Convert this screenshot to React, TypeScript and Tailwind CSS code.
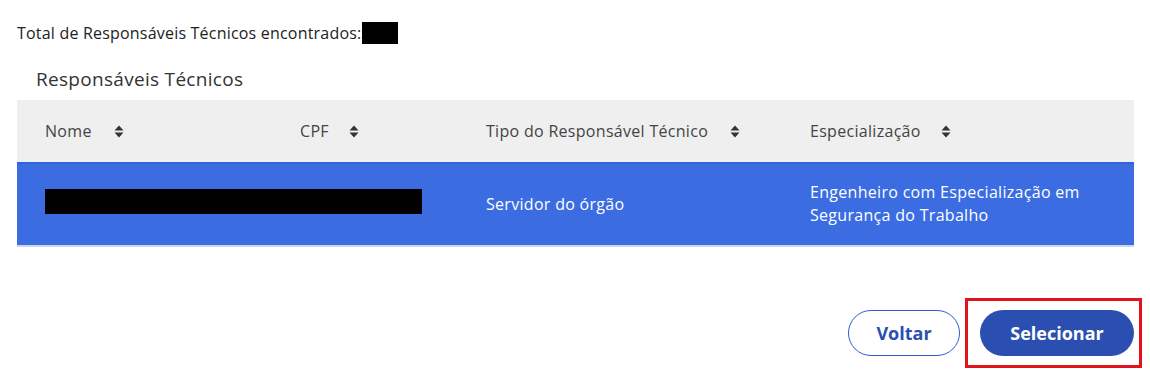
import React from 'react';

function SortIcon() {
  return (
    <svg width="10" height="13" viewBox="0 0 10 13" className="shrink-0">
      <path d="M5 0.5 L9.5 5.5 H0.5 Z" fill="#333" />
      <path d="M5 12.5 L9.5 7.5 H0.5 Z" fill="#333" />
    </svg>
  );
}

export default function App() {
  const font = { fontFamily: '"Open Sans", Lato, sans-serif' };
  return (
    <div className="w-[1150px] h-[392px] bg-white text-[#333]" style={font}>
      <div className="pt-[22px] pl-[17px] flex items-center text-[16px] tracking-[0.2px] text-[#222] h-[22px] box-content">
        <span>Total de Responsáveis Técnicos encontrados:</span>
        <span className="inline-block w-[36px] h-[22px] bg-black ml-px" />
      </div>

      <h2 className="mt-[23px] ml-[36px] text-[19px] tracking-[0.3px] leading-[24px] text-[#333]">Responsáveis Técnicos</h2>

      <div className="mt-[9px] mx-[17px] w-[1117px] tracking-[0.3px]">
        {/* header */}
        <div className="h-[62px] bg-[#efefef] flex items-center text-[16px] text-[#444]">
          <div className="w-[255px] pl-[28px] flex items-center gap-[22px]">
            <span>Nome</span>
            <SortIcon />
          </div>
          <div className="w-[186px] pl-[28px] flex items-center gap-[20px]">
            <span>CPF</span>
            <SortIcon />
          </div>
          <div className="w-[324px] pl-[28px] flex items-center gap-[22px]">
            <span>Tipo do Responsável Técnico</span>
            <SortIcon />
          </div>
          <div className="flex-1 pl-[28px] flex items-center gap-[20px]">
            <span>Especialização</span>
            <SortIcon />
          </div>
        </div>
        {/* row */}
        <div className="h-[85px] bg-[#3b6ce2] border-t-2 border-[#2f64de] border-b-2 border-b-[#c9d6f2] flex items-center text-[16px] text-white">
          <div className="w-[441px] pl-[28px] pb-[6px]">
            <span className="block w-[377px] h-[25px] bg-black" />
          </div>
          <div className="w-[324px] pl-[28px] pb-[2px]">Servidor do órgão</div>
          <div className="flex-1 pl-[28px] leading-[23px] pb-[2px]">
            Engenheiro com Especialização em<br />Segurança do Trabalho
          </div>
        </div>
      </div>

      <div className="mt-[51px] mr-[8px] flex justify-end items-center">
        <button className="w-[112px] h-[46px] rounded-full border border-[#2d5cc9] text-[#2a4fb0] text-[18px] font-bold mr-[5px]">
          Voltar
        </button>
        <div className="border-[3px] border-[#e0141b] py-[9px] pl-[12px] pr-[5px]">
          <button className="block w-[154px] h-[46px] rounded-full bg-[#2a4fb0] text-white text-[18px] font-bold">
            Selecionar
          </button>
        </div>
      </div>
    </div>
  );
}
